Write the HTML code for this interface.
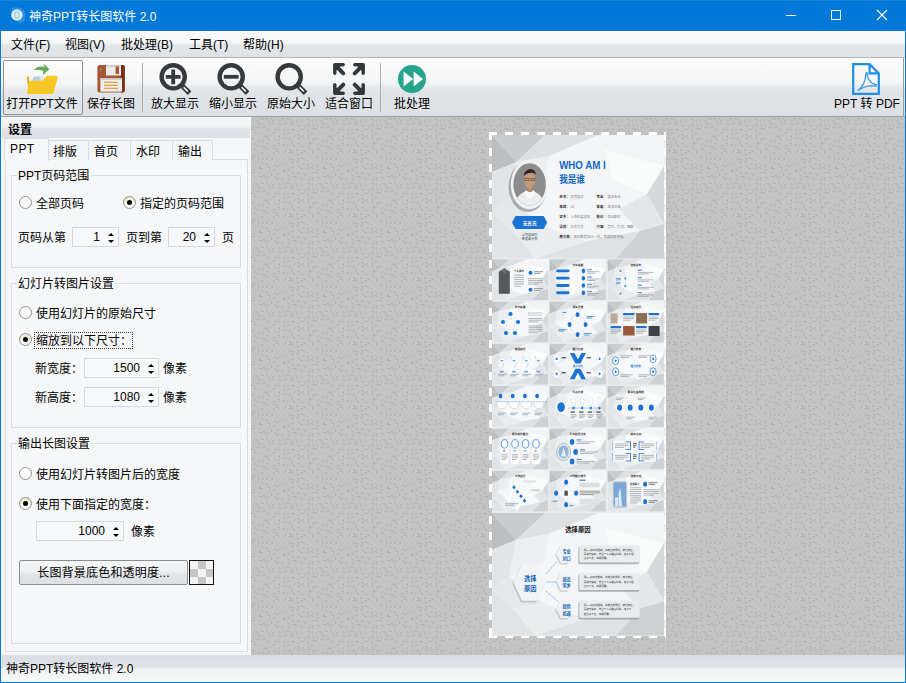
<!DOCTYPE html>
<html lang="zh-CN">
<head>
<meta charset="utf-8">
<title>神奇PPT转长图软件 2.0</title>
<style>
*{box-sizing:border-box;margin:0;padding:0}
html,body{width:906px;height:683px;overflow:hidden;background:#0078d7}
body{font-family:"Liberation Sans","Noto Sans CJK SC",sans-serif;font-size:12px;color:#000;position:relative}
.abs{position:absolute}
#win{position:absolute;left:0;top:0;width:906px;height:683px;background:#0078d7}
#title{position:absolute;left:0;top:0;width:906px;height:31px;background:#0078d7;border-top:1px solid #1883db}
#title .txt{position:absolute;left:29px;top:8px;color:#fff;font-size:12px;line-height:16px;white-space:nowrap}
#menubar{position:absolute;left:1px;top:31px;width:904px;height:26px;background:linear-gradient(#fafafa 0,#f6f7f8 44%,#e3e6e9 56%,#dfe3e6 100%)}
#menubar span{position:absolute;top:6px;line-height:16px;white-space:nowrap}
#mline{position:absolute;left:1px;top:57px;width:904px;height:1px;background:#b4b6b8}
#toolbar{position:absolute;left:1px;top:58px;width:904px;height:58px;background:linear-gradient(#fcfcfc 0,#f4f5f6 42%,#e1e5e8 55%,#dde1e5 100%)}
#tline{position:absolute;left:1px;top:116px;width:904px;height:1px;background:#9c9c9c}
.tb{position:absolute;top:2px;height:54px;width:0;text-align:center}
.tb .lb{position:absolute;left:-50px;width:100px;top:36px;line-height:16px;text-align:center;white-space:nowrap}
.tb svg{position:absolute;top:3px;left:50%;margin-left:-16px}
.sep{position:absolute;top:5px;width:1px;height:49px;background:#a9acae}
#left{position:absolute;left:1px;top:117px;width:250px;height:538px;background:#f5f6f7}
#lhead{position:absolute;left:1px;top:0;width:248px;height:21px;background:linear-gradient(#f6f7f8 0,#f1f2f4 46%,#e0e4e8 58%,#dde1e5 100%)}
#lhead b{position:absolute;left:6px;top:5px;line-height:16px;font-weight:bold}
#preview{position:absolute;left:251px;top:117px;width:654px;height:538px;background:#c1c1c1;overflow:hidden}
#status{position:absolute;left:1px;top:655px;width:904px;height:27px;background:linear-gradient(#d9dde2 0,#dfe3e7 44%,#f2f3f4 54%,#f7f8f8 100%)}
#status span{position:absolute;left:5px;top:6px;line-height:16px}

#left .t{position:absolute;line-height:16px;white-space:nowrap;margin-top:1px}
.tab{position:absolute;top:23px;height:20px;border:1px solid #d3dde4;border-bottom:none;background:#f4f5f6}
.tab span{position:absolute;left:4px;top:3px;line-height:16px;white-space:nowrap}
#page{position:absolute;left:4px;top:42px;width:243px;height:493px;border:1px solid #d3dde4;background:#f6f7f8}
.gb{position:absolute;left:10px;width:230px;border:1px solid #d5dee5}
.gl{position:absolute;left:16px;margin-top:1px;line-height:16px;background:#f6f7f8;padding:0 2px 0 1px;white-space:nowrap}
.rd{position:absolute;width:13px;height:13px;border:1px solid #8e8f8f;border-radius:50%;background:#fbfbfb}
.rd.on{background:linear-gradient(#eeecd4 0,#eeecd4 52%,#fdfdfd 53%);border-color:#8e8f8f}
.rd.on::after{content:"";position:absolute;left:3px;top:3px;width:5px;height:5px;border-radius:50%;background:#000}
.sp{position:absolute;height:20px;border:1px solid #cfd9e1;background:#f7f8f9}
.sp i{position:absolute;right:18px;top:1px;line-height:16px;font-style:normal}
.sp::before{content:"";position:absolute;right:4px;top:5px;border:3px solid transparent;border-top:none;border-bottom:3.5px solid #000;width:0;height:0}
.sp::after{content:"";position:absolute;right:4px;top:12px;border:3px solid transparent;border-bottom:none;border-top:3.5px solid #000;width:0;height:0}
</style>
</head>
<body>
<div id="win">
<div id="title">
<svg class="abs" style="left:8px;top:5px" width="20" height="20" viewBox="0 0 20 20"><path d="M4 1.5h9l4 4v8.5l-4.5 4-3.5-3.5-6-3z" fill="#2b90e0"/><circle cx="8.9" cy="9" r="5.7" fill="#d9ecee"/><path d="M7 6h4v6H7z" fill="none" stroke="#8cc7e6" stroke-width="1"/></svg>
<div class="txt">神奇PPT转长图软件 2.0</div>
<svg class="abs" style="left:780px;top:4px" width="120" height="22" viewBox="0 0 120 22"><path d="M6 10.5h10" stroke="#fff" stroke-width="1"/><rect x="51.5" y="5.5" width="9" height="9" fill="none" stroke="#fff" stroke-width="1"/><path d="M97 5l10 10M107 5l-10 10" stroke="#fff" stroke-width="1.1"/></svg>
</div>
<div id="menubar">
<span style="left:10px">文件(F)</span><span style="left:64px">视图(V)</span><span style="left:120px">批处理(B)</span><span style="left:188px">工具(T)</span><span style="left:242px">帮助(H)</span>
</div>
<div id="mline"></div>
<div id="toolbar">
<div class="abs" style="left:2px;top:2px;width:80px;height:55px;border:1px solid #8e9092;border-radius:2px;background:linear-gradient(#fdfdfd 0,#f3f4f5 45%,#e4e7ea 56%,#e0e4e7 100%)"></div>
<div class="tb" style="left:41px"><svg width="32" height="32" viewBox="0 0 32 32">
<path d="M7.5 7.6C10.5 3.2 15.5 2.6 18.6 4.4L17.4 0.6 23.4 6.2 16.8 12 17.4 8.4C14.4 6.6 10.4 6.4 7.5 7.6z" fill="#66a856"/>
<path d="M0.6 14.2l2.2-0.9 1.3 15.5-1.2 1.4z" fill="#e8a530"/>
<path d="M5.5 18l1.5-4.5 7-1 5 1.5 0 4z" fill="#dfe6ea"/><path d="M6.6 17.8l1-3.6 5-0.6 3 4.2z" fill="#b8cfe0"/>
<path d="M3.2 17.8h13.4l4.4-5h9.2q1.8 0.2 1.5 2l-4 14.6q-0.5 1.6-2.2 1.6H2.2q-1.6-0.2-1.1-1.8z" fill="#f5c827"/>
</svg><div class="lb">打开PPT文件</div></div>
<div class="tb" style="left:110px"><svg width="32" height="32" viewBox="0 0 32 32">
<rect x="2.4" y="2" width="27.4" height="27.4" rx="2.2" fill="#a65632"/>
<path d="M25.5 2h2.1q2.2 0 2.2 2.2v23q0 2.2-2.2 2.2h-2.1z" fill="#7b2f1f"/>
<rect x="11" y="2" width="15" height="10.5" fill="#e9eaeb"/><path d="M11 2h15v2H11z" fill="#cfd0d1"/><rect x="20.6" y="3.4" width="3.4" height="7.6" fill="#a65632"/>
<rect x="5.4" y="15.2" width="21.6" height="13.4" fill="#ecedee"/><path d="M5.4 15.2h21.6v1.6H5.4z" fill="#c9cacb"/>
<path d="M9 19.4h14M9 22.4h14M9 25.4h14" stroke="#e6a23c" stroke-width="1.3"/>
<rect x="4.6" y="5.6" width="2" height="2" fill="#8d8f92"/>
</svg><div class="lb">保存长图</div></div>
<div class="sep" style="left:141px"></div>
<div class="tb" style="left:174px"><svg width="32" height="32" viewBox="0 0 32 32">
<circle cx="14.2" cy="13.8" r="11.6" fill="none" stroke="#343a3f" stroke-width="4.4"/>
<path d="M22.4 22l8.2 8.2" stroke="#343a3f" stroke-width="5" stroke-linecap="butt"/><path d="M24.6 24.2l4.2 4.2" stroke="#f0f1f2" stroke-width="1.6"/>
<path d="M6.800 13.800h14.800M14.200 6.400v14.800" stroke="#343a3f" stroke-width="3.800"/>
</svg><div class="lb">放大显示</div></div>
<div class="tb" style="left:232px"><svg width="32" height="32" viewBox="0 0 32 32">
<circle cx="14.2" cy="13.8" r="11.6" fill="none" stroke="#343a3f" stroke-width="4.4"/>
<path d="M22.4 22l8.2 8.2" stroke="#343a3f" stroke-width="5"/><path d="M24.6 24.2l4.2 4.2" stroke="#f0f1f2" stroke-width="1.6"/>
<path d="M6.800 13.800h14.800" stroke="#343a3f" stroke-width="3.800"/>
</svg><div class="lb">缩小显示</div></div>
<div class="tb" style="left:290px"><svg width="32" height="32" viewBox="0 0 32 32">
<circle cx="14.2" cy="13.8" r="11.6" fill="none" stroke="#343a3f" stroke-width="4.4"/>
<path d="M22.4 22l8.2 8.2" stroke="#343a3f" stroke-width="5"/><path d="M24.6 24.2l4.2 4.2" stroke="#f0f1f2" stroke-width="1.6"/>
</svg><div class="lb">原始大小</div></div>
<div class="tb" style="left:348px"><svg width="32" height="32" viewBox="0 0 32 32" fill="#32373b" stroke="#32373b" stroke-linecap="round" stroke-linejoin="round">
<g id="fa"><path d="M1.800 10.200V1.800H10.200" fill="none" stroke-width="3.400"/><path d="M3 3l7.300 7.300" stroke-width="4"/><path d="M1.800 1.800h6.500l-6.500 6.500z" stroke-width="1"/></g>
<g transform="translate(32,0) scale(-1,1)"><path d="M1.800 10.200V1.800H10.200" fill="none" stroke-width="3.400"/><path d="M3 3l7.300 7.300" stroke-width="4"/><path d="M1.800 1.800h6.500l-6.500 6.500z" stroke-width="1"/></g>
<g transform="translate(0,32) scale(1,-1)"><path d="M1.800 10.200V1.800H10.200" fill="none" stroke-width="3.400"/><path d="M3 3l7.300 7.300" stroke-width="4"/><path d="M1.800 1.800h6.500l-6.500 6.500z" stroke-width="1"/></g>
<g transform="translate(32,32) scale(-1,-1)"><path d="M1.800 10.200V1.800H10.200" fill="none" stroke-width="3.400"/><path d="M3 3l7.300 7.300" stroke-width="4"/><path d="M1.800 1.800h6.500l-6.500 6.500z" stroke-width="1"/></g>
</svg><div class="lb">适合窗口</div></div>
<div class="sep" style="left:379px"></div>
<div class="tb" style="left:411px"><svg width="32" height="32" viewBox="0 0 32 32">
<circle cx="16" cy="16" r="14" fill="#27a58c"/>
<path d="M7.6 8.600l9.400 7.400-9.400 7.400z" fill="#fff"/><path d="M17.600 8.600l9.400 7.400-9.400 7.400z" fill="#fff"/>
</svg><div class="lb">批处理</div></div>
<div class="tb" style="left:865px"><svg width="32" height="32" viewBox="0 0 32 32">
<path d="M3.200 1.200h16.400l9.200 9.200v20.400H3.200z" fill="none" stroke="#1e8ee3" stroke-width="2.200"/>
<path d="M19.600 1.200v9.200h9.200" fill="none" stroke="#1e8ee3" stroke-width="2.200"/>
<path d="M8 27.500c4-3 7.500-9.500 8-17 .1-1.400 1.400-1.200 1.300.2-.3 4.600 2.700 9.800 8.200 10.800 1.600.3 1.400 1.800-.2 1.600-5-.6-11.800.6-17.300 4.400z" fill="none" stroke="#3b9be8" stroke-width="1.300"/>
</svg><div class="lb" style="left:-49px">PPT 转 PDF</div></div>
<div class="abs" style="left:902px;top:0;width:1px;height:58px;background:#9a9c9e"></div>
</div>
<div id="tline"></div>
<div id="left">
<div id="lhead"><b>设置</b></div>
<div id="page"></div>
<div class="tab" style="left:47px;width:41px"><span>排版</span></div>
<div class="tab" style="left:87px;width:43px"><span style="left:5px">首页</span></div>
<div class="tab" style="left:129px;width:43px"><span style="left:5px">水印</span></div>
<div class="tab" style="left:171px;width:41px"><span style="left:5px">输出</span></div>
<div class="tab" style="left:3px;top:21px;width:45px;height:23px;background:#f6f7f8"><span style="top:2px;letter-spacing:0.4px;left:5px">PPT</span></div>
<div class="gb" style="top:58px;height:93px"></div><div class="gl" style="top:50px">PPT页码范围</div>
<div class="rd" style="left:18px;top:79px"></div><div class="t" style="left:35px;top:78px">全部页码</div>
<div class="rd on" style="left:122px;top:79px"></div><div class="t" style="left:139px;top:78px">指定的页码范围</div>
<div class="t" style="left:17px;top:112px">页码从第</div>
<div class="sp" style="left:71px;top:110px;width:47px"><i>1</i></div>
<div class="t" style="left:125px;top:112px">页到第</div>
<div class="sp" style="left:167px;top:110px;width:47px"><i>20</i></div>
<div class="t" style="left:221px;top:112px">页</div>
<div class="gb" style="top:166px;height:145px"></div><div class="gl" style="top:158px">幻灯片转图片设置</div>
<div class="rd" style="left:18px;top:189px"></div><div class="t" style="left:35px;top:188px">使用幻灯片的原始尺寸</div>
<div class="rd on" style="left:18px;top:216px"></div><div class="t" style="left:35px;top:215px">缩放到以下尺寸：</div>
<div class="abs" style="left:33px;top:215px;width:99px;height:17px;border:1px dotted #333"></div>
<div class="t" style="left:34px;top:243px">新宽度：</div>
<div class="sp" style="left:83px;top:241px;width:75px"><i>1500</i></div>
<div class="t" style="left:162px;top:243px">像素</div>
<div class="t" style="left:34px;top:272px">新高度：</div>
<div class="sp" style="left:83px;top:270px;width:75px"><i>1080</i></div>
<div class="t" style="left:162px;top:272px">像素</div>
<div class="gb" style="top:326px;height:201px"></div><div class="gl" style="top:318px">输出长图设置</div>
<div class="rd" style="left:18px;top:350px"></div><div class="t" style="left:35px;top:349px">使用幻灯片转图片后的宽度</div>
<div class="rd on" style="left:18px;top:380px"></div><div class="t" style="left:35px;top:379px">使用下面指定的宽度：</div>
<div class="sp" style="left:35px;top:404px;width:88px"><i>1000</i></div>
<div class="t" style="left:130px;top:406px">像素</div>
<div class="abs" style="left:18px;top:443px;width:169px;height:25px;border:1px solid #8b8d8f;border-radius:2px;background:linear-gradient(#f6f7f8 0,#f0f1f2 45%,#e0e4e7 58%,#dde1e5 100%)"><span class="t" style="left:0;right:0;top:3px;text-align:center;letter-spacing:0.2px">长图背景底色和透明度...</span></div>
<svg class="abs" style="left:188px;top:443px" width="25" height="25" viewBox="0 0 25 25"><rect x="0.5" y="0.5" width="24" height="24" fill="#f4f4f4" stroke="#111" stroke-width="1"/><path d="M9 1h8v8H9zM1 9h8v8H1zM17 9h7v8h-7zM9 17h8v7H9z" fill="#c6c6c6"/></svg>
</div>
<div id="preview">
<svg class="abs" style="left:0;top:0" width="654" height="538"><defs><pattern id="tx" width="64" height="64" patternUnits="userSpaceOnUse"><path d="M3 2.5h1m-2 1h1m-2 1h1M1 8.5h1v2M0.5 11v1h2M3 15.5h3M0 21.5h2v1M4 26.5h1m-2 1h1m-2 1h1M2.5 31v1h2M2.5 37v2h1M0 40.5h1v2M2.5 47v3M1 52.5h2v1M0 55.5h2v1M2 60.5h3M6.5 2v2h1M7 6.5h1v2M6.5 9v1h2M7 16.5h3M6 23.5h2v1M5 28.5h2v1M6 33.5h1m0 1h1m0 1h1M6 36.5h1v2M7.5 40v2h1M6 44.5h1m0 1h1m0 1h1M7 49.5h1v2M9 54.5h1m-2 1h1m-2 1h1M8 59.5h2v1M10.5 1v1h2M11 6.5h1m0 1h1m0 1h1M11 10.5h3M13.5 18v1h2M11 23.5h1v2M10.5 28v1h2M12.5 29v1h2M10.5 35v1h2M11.5 40v2h1M10 45.5h1v2M9.5 50v1h2M13 57.5h1m-2 1h1m-2 1h1M13 59.5h1m0 1h1m0 1h1M15 1.5h1v2M17 5.5h1v2M15 12.5h2v1M17 18.5h1m-2 1h1m-2 1h1M17.5 21v2h1M15 26.5h3M15 32.5h3M18 38.5h1m-2 1h1m-2 1h1M15.5 40v2h1M15.5 46v1h2M17 50.5h1v2M17 54.5h1m0 1h1m0 1h1M16.5 59v1h2M20.5 2v1h2M22 5.5h1m-2 1h1m-2 1h1M23 12.5h2v1M21 15.5h2v1M23.5 21v3M22 28.5h2v1M22.5 29v2h1M22.5 35v2h1M19 41.5h2v1M23.5 47v1h2M22.5 52v3M20.5 56v2h1M23 60.5h2v1M28.5 2v1h2M27 6.5h2v1M27.5 10v2h1M28.5 18v3M26.5 22v1h2M26 26.5h2v1M24 32.5h2v1M25 34.5h2v1M27 42.5h1m-2 1h1m-2 1h1M29 46.5h1m-2 1h1m-2 1h1M25 49.5h3M25 56.5h2v1M27 61.5h1m-2 1h1m-2 1h1M31 1.5h1m0 1h1m0 1h1M32 5.5h1m0 1h1m0 1h1M32 12.5h1v2M32.5 16v1h2M33.5 20v1h2M31 27.5h2v1M32 33.5h3M34 34.5h1m-2 1h1m-2 1h1M30 40.5h1m0 1h1m0 1h1M31.5 46v3M32.5 52v1h2M31 54.5h2v1M30 61.5h3M36.5 1v1h2M36 5.5h1m-2 1h1m-2 1h1M35 12.5h3M35 15.5h2v1M38.5 20v2h1M36.5 27v3M38 32.5h1v2M37 35.5h2v1M37 41.5h2v1M35.5 45v3M36 52.5h2v1M36 57.5h1m0 1h1m0 1h1M37 61.5h1v2M39 3.5h1m0 1h1m0 1h1M39 6.5h2v1M40 12.5h2v1M44 18.5h1m-2 1h1m-2 1h1M40.5 23v2h1M42.5 27v2h1M40.5 33v2h1M43.5 36v3M40 42.5h2v1M42 44.5h1m-2 1h1m-2 1h1M40 50.5h3M41.5 54v2h1M41 59.5h2v1M45.5 3v1h2M46 8.5h2v1M49 12.5h1m-2 1h1m-2 1h1M46 17.5h1v2M46 21.5h2v1M46 26.5h2v1M45.5 32v1h2M45 37.5h2v1M46 41.5h1v2M45 44.5h2v1M46 49.5h2v1M46.5 55v1h2M44.5 59v1h2M49 2.5h1m0 1h1m0 1h1M52 8.5h1m0 1h1m0 1h1M50.5 11v1h2M52 18.5h1m-2 1h1m-2 1h1M51 20.5h1m0 1h1m0 1h1M51.5 28v1h2M51 33.5h2v1M49 35.5h3M50.5 40v1h2M51.5 46v1h2M49 51.5h3M52 56.5h1m0 1h1m0 1h1M49 61.5h2v1M56 2.5h2v1M56 7.5h2v1M56 13.5h1v2M57.5 17v3M57.5 20v3M57 25.5h1v2M57 30.5h1v2M54 34.5h1m0 1h1m0 1h1M54 42.5h1m0 1h1m0 1h1M56 47.5h1v2M55 51.5h2v1M54.5 56v3M57.5 61v2h1M61.5 2v3M61 7.5h1v2M61 11.5h2v1M59 16.5h2v1M61 21.5h1v2M59.5 25v1h2M61.5 33v2h1M63 34.5h1m-2 1h1m-2 1h1M59 39.5h1m0 1h1m0 1h1M60 46.5h1m0 1h1m0 1h1M59 50.5h2v1M63 54.5h1m-2 1h1m-2 1h1M60 60.5h1v2" fill="none" stroke="#b3b3b3" stroke-width="1" shape-rendering="crispEdges"/></pattern></defs><rect width="654" height="538" fill="#c3c3c3"/><rect width="654" height="538" fill="url(#tx)"/></svg>
<svg class="abs" style="left:238px;top:15px" width="177" height="506" viewBox="0 0 177 506" font-family="Liberation Sans,Noto Sans CJK SC,sans-serif">
<rect x="0" y="0" width="177" height="506" fill="#e9ebed"/>
<rect x="3" y="3" width="172" height="123.5" fill="#f4f5f6"/><polygon points="3,3 56.3,3 27.1,30.2" fill="#c9cbcd"/><polygon points="3,3 27.1,30.2 3,40" fill="#bcbec0"/><polygon points="56.3,3 109.6,3 59.8,24 27.1,30.2" fill="#dde1e4"/><polygon points="3,40 27.1,30.2 20.2,67.2 3,79.6" fill="#e2e5e8"/><polygon points="27.1,30.2 59.8,24 54.6,52.4 20.2,67.2" fill="#eceef0"/><polygon points="109.6,3 175,3 175,33.9 116.5,17.8" fill="#f3f4f6"/><polygon points="116.5,17.8 175,33.9 157.8,62.3 123.4,47.5" fill="#fafbfb"/><polygon points="175,33.9 175,91.9 157.8,62.3" fill="#d6d9dc"/><polygon points="157.8,62.3 175,91.9 150.9,99.3 130.3,77.1" fill="#e4e7ea"/><polygon points="175,91.9 175,126.5 126.8,126.5 150.9,99.3" fill="#ced1d4"/><polygon points="46,126.5 126.8,126.5 150.9,99.3 97.6,109.2" fill="#dee2e5"/><polygon points="3,79.6 3,126.5 46,126.5 23.6,99.3" fill="#e1e4e7"/><polygon points="3,79.6 20.2,67.2 54.6,94.4 23.6,99.3" fill="#e6e9eb"/><polygon points="23.6,99.3 54.6,94.4 97.6,109.2 46,126.5" fill="#eaedef"/>
<ellipse cx="38.8" cy="54.8" rx="19.2" ry="25.2" fill="#8d8f91" opacity="0.7"/>
<ellipse cx="40.4" cy="52.6" rx="18.6" ry="24.6" fill="#f1f2f3"/>
<ellipse cx="40.6" cy="52.4" rx="16.2" ry="21.2" fill="#8c8c8c"/>
<clipPath id="pc"><ellipse cx="40.6" cy="52.4" rx="16.2" ry="21.2"/></clipPath>
<g clip-path="url(#pc)"><ellipse cx="40.6" cy="76" rx="15.5" ry="17" fill="#eceeef"/><rect x="38.6" y="54" width="4.4" height="6" fill="#b88f6e"/><ellipse cx="40.8" cy="47.5" rx="5.6" ry="9" fill="#c39a78"/><path d="M35.8 46.5h4.2v2h-4.2zM41.6 46.5h4.2v2h-4.2z" fill="none" stroke="#3a302a" stroke-width="0.5"/><path d="M34.8 44c0-8 11.5-9.5 12.2-1.5c-3-2.5-8-2.5-12.2 1.5z" fill="#2a2522"/><path d="M36.5 58l4.3 3 4.3-3 1 4-5.3 5-5.3-5z" fill="#fafafa"/></g>
<text transform="translate(70.2,37.1) scale(1,1.2)" font-size="9.7" fill="#1068c4" font-weight="bold" text-anchor="start">WHO AM I</text>
<text transform="translate(70.2,51.2) scale(1,1.2)" font-size="8.6" fill="#1068c4" font-weight="bold" text-anchor="start">我是谁</text>
<text x="70.6" y="66" font-size="3.3" fill="#222" font-weight="bold">姓名：<tspan fill="#7a7f85" font-weight="normal" dx="1">吴克国汉</tspan></text>
<text x="107.6" y="66" font-size="3.3" fill="#222" font-weight="bold">专业：<tspan fill="#7a7f85" font-weight="normal" dx="1">高深专业</tspan></text>
<text x="70.6" y="76" font-size="3.3" fill="#222" font-weight="bold">年龄：<tspan fill="#7a7f85" font-weight="normal" dx="1">20</tspan></text>
<text x="107.6" y="76" font-size="3.3" fill="#222" font-weight="bold">年级：<tspan fill="#7a7f85" font-weight="normal" dx="1">高深年级</tspan></text>
<text x="70.6" y="86.1" font-size="3.3" fill="#222" font-weight="bold">家乡：<tspan fill="#7a7f85" font-weight="normal" dx="1">上海市嘉定区</tspan></text>
<text x="107.6" y="86.1" font-size="3.3" fill="#222" font-weight="bold">职位：<tspan fill="#7a7f85" font-weight="normal" dx="1">高深职位</tspan></text>
<text x="70.6" y="96.2" font-size="3.3" fill="#222" font-weight="bold">学校：<tspan fill="#7a7f85" font-weight="normal" dx="1">北京大学</tspan></text>
<text x="107.6" y="96.2" font-size="3.3" fill="#222" font-weight="bold">兴趣：<tspan fill="#7a7f85" font-weight="normal" dx="1">音乐、打球、唱歌</tspan></text>
<text x="70.6" y="106" font-size="3.3" fill="#222" font-weight="bold">座右铭：<tspan fill="#7a7f85" font-weight="normal" dx="1">每天都超自己一次，我真的很幸福。</tspan></text>
<polygon points="23,90.5 26.5,84 54.7,84 58.2,90.5 54.7,97 26.5,97" fill="#1a72d2"/>
<text x="40.6" y="92.8" font-size="4.6" fill="#fff" font-weight="bold" text-anchor="middle">无名氏</text>
<text x="40.6" y="103.6" font-size="3.1" fill="#333" font-weight="normal" text-anchor="middle">公司总经理</text>
<text x="40.6" y="108.2" font-size="3.1" fill="#333" font-weight="normal" text-anchor="middle">带发或头衔</text>
<g><rect x="3" y="127.2" width="56.3" height="40.8" fill="#f6f7f8"/><polygon points="3,127.2 20.5,127.2 10.9,136.2" fill="#c9cbcd"/><polygon points="3,127.2 10.9,136.2 3,139.4" fill="#bcbec0"/><polygon points="20.5,127.2 37.9,127.2 21.6,134.1 10.9,136.2" fill="#dde1e4"/><polygon points="3,139.4 10.9,136.2 8.6,148.4 3,152.5" fill="#e2e5e8"/><polygon points="10.9,136.2 21.6,134.1 19.9,143.5 8.6,148.4" fill="#eceef0"/><polygon points="37.9,127.2 59.3,127.2 59.3,137.4 40.2,132.1" fill="#f3f4f6"/><polygon points="40.2,132.1 59.3,137.4 53.7,146.8 42.4,141.9" fill="#fafbfb"/><polygon points="59.3,137.4 59.3,156.6 53.7,146.8" fill="#d6d9dc"/><polygon points="53.7,146.8 59.3,156.6 51.4,159 44.7,151.7" fill="#e4e7ea"/><polygon points="59.3,156.6 59.3,168 43.5,168 51.4,159" fill="#ced1d4"/><polygon points="17.1,168 43.5,168 51.4,159 34,162.3" fill="#dee2e5"/><polygon points="3,152.5 3,168 17.1,168 9.8,159" fill="#e1e4e7"/><polygon points="3,152.5 8.6,148.4 19.9,157.4 9.8,159" fill="#e6e9eb"/><polygon points="9.8,159 19.9,157.4 34,162.3 17.1,168" fill="#eaedef"/><rect x="9.5" y="135.7" width="11.5" height="26" fill="#dfe2e4" rx="1"/><path d="M9.8 139.7q5.5-5 11 0v22h-11z" fill="#55585c"/><ellipse cx="15.3" cy="138.7" rx="2" ry="2.6" fill="#6d6f72"/><text x="25" y="140.2" font-size="2.5" fill="#222" font-weight="bold" text-anchor="start">个人简介</text><path d="M25 143.2h10M25 145.4h10M25 147.6h10M25 149.8h10M25 152h10M25 154.2h7" stroke="#858b91" stroke-width="0.6" fill="none"/><circle cx="41.5" cy="140.7" r="2" fill="#1a72d2"/><circle cx="41.5" cy="157.7" r="2" fill="#1a72d2"/><path d="M45 139.7h9M45 141.4h6.3" stroke="#555" stroke-width="0.6" fill="none"/><path d="M39 146.7h15M39 148.5h15M39 150.3h15M39 152.1h10.5" stroke="#858b91" stroke-width="0.6" fill="none"/><path d="M45 156.7h9M45 158.4h6.3" stroke="#555" stroke-width="0.6" fill="none"/></g>
<g><rect x="60.6" y="127.2" width="56.3" height="40.8" fill="#f6f7f8"/><polygon points="60.6,127.2 78.1,127.2 68.5,136.2" fill="#c9cbcd"/><polygon points="60.6,127.2 68.5,136.2 60.6,139.4" fill="#bcbec0"/><polygon points="78.1,127.2 95.5,127.2 79.2,134.1 68.5,136.2" fill="#dde1e4"/><polygon points="60.6,139.4 68.5,136.2 66.2,148.4 60.6,152.5" fill="#e2e5e8"/><polygon points="68.5,136.2 79.2,134.1 77.5,143.5 66.2,148.4" fill="#eceef0"/><polygon points="95.5,127.2 116.9,127.2 116.9,137.4 97.8,132.1" fill="#f3f4f6"/><polygon points="97.8,132.1 116.9,137.4 111.3,146.8 100,141.9" fill="#fafbfb"/><polygon points="116.9,137.4 116.9,156.6 111.3,146.8" fill="#d6d9dc"/><polygon points="111.3,146.8 116.9,156.6 109,159 102.3,151.7" fill="#e4e7ea"/><polygon points="116.9,156.6 116.9,168 101.1,168 109,159" fill="#ced1d4"/><polygon points="74.7,168 101.1,168 109,159 91.6,162.3" fill="#dee2e5"/><polygon points="60.6,152.5 60.6,168 74.7,168 67.4,159" fill="#e1e4e7"/><polygon points="60.6,152.5 66.2,148.4 77.5,157.4 67.4,159" fill="#e6e9eb"/><polygon points="67.4,159 77.5,157.4 91.6,162.3 74.7,168" fill="#eaedef"/><text x="88.8" y="133.8" font-size="2.7" fill="#222" font-weight="bold" text-anchor="middle">专业技能</text><rect x="67.1" y="137.4" width="18" height="2.9" fill="#fff" rx="1.4"/><rect x="67.1" y="137.4" width="13.5" height="2.9" fill="#1a72d2" rx="1.4"/><ellipse cx="94.4" cy="138.9" rx="1.7" ry="2.3" fill="#1a72d2"/><path d="M98.1 137.7h4.9" stroke="#1a72d2" stroke-width="0.8" fill="none"/><path d="M98.1 139.7h12M98.1 141.2h8.4" stroke="#858b91" stroke-width="0.6" fill="none"/><rect x="67.1" y="144.7" width="18" height="2.9" fill="#fff" rx="1.4"/><rect x="67.1" y="144.7" width="13.5" height="2.9" fill="#1a72d2" rx="1.4"/><ellipse cx="94.4" cy="146.2" rx="1.7" ry="2.3" fill="#1a72d2"/><path d="M98.1 145h4.9" stroke="#1a72d2" stroke-width="0.8" fill="none"/><path d="M98.1 147h12M98.1 148.5h8.4" stroke="#858b91" stroke-width="0.6" fill="none"/><rect x="67.1" y="152" width="18" height="2.9" fill="#fff" rx="1.4"/><rect x="67.1" y="152" width="13.5" height="2.9" fill="#1a72d2" rx="1.4"/><ellipse cx="94.4" cy="153.5" rx="1.7" ry="2.3" fill="#1a72d2"/><path d="M98.1 152.3h4.9" stroke="#1a72d2" stroke-width="0.8" fill="none"/><path d="M98.1 154.3h12M98.1 155.8h8.4" stroke="#858b91" stroke-width="0.6" fill="none"/><rect x="67.1" y="159.3" width="18" height="2.9" fill="#fff" rx="1.4"/><rect x="67.1" y="159.3" width="13.5" height="2.9" fill="#1a72d2" rx="1.4"/><ellipse cx="94.4" cy="160.8" rx="1.7" ry="2.3" fill="#1a72d2"/><path d="M98.1 159.6h4.9" stroke="#1a72d2" stroke-width="0.8" fill="none"/><path d="M98.1 161.6h12M98.1 163.1h8.4" stroke="#858b91" stroke-width="0.6" fill="none"/></g>
<g><rect x="118.6" y="127.2" width="56.3" height="40.8" fill="#f6f7f8"/><polygon points="118.6,127.2 136.1,127.2 126.5,136.2" fill="#c9cbcd"/><polygon points="118.6,127.2 126.5,136.2 118.6,139.4" fill="#bcbec0"/><polygon points="136.1,127.2 153.5,127.2 137.2,134.1 126.5,136.2" fill="#dde1e4"/><polygon points="118.6,139.4 126.5,136.2 124.2,148.4 118.6,152.5" fill="#e2e5e8"/><polygon points="126.5,136.2 137.2,134.1 135.5,143.5 124.2,148.4" fill="#eceef0"/><polygon points="153.5,127.2 174.9,127.2 174.9,137.4 155.8,132.1" fill="#f3f4f6"/><polygon points="155.8,132.1 174.9,137.4 169.3,146.8 158,141.9" fill="#fafbfb"/><polygon points="174.9,137.4 174.9,156.6 169.3,146.8" fill="#d6d9dc"/><polygon points="169.3,146.8 174.9,156.6 167,159 160.3,151.7" fill="#e4e7ea"/><polygon points="174.9,156.6 174.9,168 159.1,168 167,159" fill="#ced1d4"/><polygon points="132.7,168 159.1,168 167,159 149.6,162.3" fill="#dee2e5"/><polygon points="118.6,152.5 118.6,168 132.7,168 125.4,159" fill="#e1e4e7"/><polygon points="118.6,152.5 124.2,148.4 135.5,157.4 125.4,159" fill="#e6e9eb"/><polygon points="125.4,159 135.5,157.4 149.6,162.3 132.7,168" fill="#eaedef"/><text x="146.8" y="133.8" font-size="2.7" fill="#222" font-weight="bold" text-anchor="middle">自我评价</text><text x="129.1" y="148.2" font-size="2.6" fill="#1a72d2" font-weight="bold" text-anchor="middle">自我</text><text x="129.1" y="151.7" font-size="2.6" fill="#1a72d2" font-weight="bold" text-anchor="middle">评价</text><path d="M131.6 136.2q10 12 0 26" fill="none" stroke="#c5ccd3" stroke-width="0.5"/><rect x="130.6" y="138.2" width="1.6" height="1.6" fill="#1a72d2"/><path d="M148.6 138.2h4.2" stroke="#1a72d2" stroke-width="0.9" fill="none"/><path d="M148.6 140.4h16M148.6 141.9h11.2" stroke="#858b91" stroke-width="0.6" fill="none"/><rect x="135.6" y="145.7" width="1.6" height="1.6" fill="#1a72d2"/><path d="M148.6 145.7h4.2" stroke="#1a72d2" stroke-width="0.9" fill="none"/><path d="M148.6 147.9h16M148.6 149.4h11.2" stroke="#858b91" stroke-width="0.6" fill="none"/><rect x="135.6" y="153.2" width="1.6" height="1.6" fill="#1a72d2"/><path d="M148.6 153.2h4.2" stroke="#1a72d2" stroke-width="0.9" fill="none"/><path d="M148.6 155.4h16M148.6 156.9h11.2" stroke="#858b91" stroke-width="0.6" fill="none"/><rect x="130.6" y="160.7" width="1.6" height="1.6" fill="#1a72d2"/><path d="M148.6 160.7h4.2" stroke="#1a72d2" stroke-width="0.9" fill="none"/><path d="M148.6 162.9h16M148.6 164.4h11.2" stroke="#858b91" stroke-width="0.6" fill="none"/></g>
<g><rect x="3" y="169.5" width="56.3" height="40.8" fill="#f6f7f8"/><polygon points="3,169.5 20.5,169.5 10.9,178.5" fill="#c9cbcd"/><polygon points="3,169.5 10.9,178.5 3,181.7" fill="#bcbec0"/><polygon points="20.5,169.5 37.9,169.5 21.6,176.4 10.9,178.5" fill="#dde1e4"/><polygon points="3,181.7 10.9,178.5 8.6,190.7 3,194.8" fill="#e2e5e8"/><polygon points="10.9,178.5 21.6,176.4 19.9,185.8 8.6,190.7" fill="#eceef0"/><polygon points="37.9,169.5 59.3,169.5 59.3,179.7 40.2,174.4" fill="#f3f4f6"/><polygon points="40.2,174.4 59.3,179.7 53.7,189.1 42.4,184.2" fill="#fafbfb"/><polygon points="59.3,179.7 59.3,198.9 53.7,189.1" fill="#d6d9dc"/><polygon points="53.7,189.1 59.3,198.9 51.4,201.3 44.7,194" fill="#e4e7ea"/><polygon points="59.3,198.9 59.3,210.3 43.5,210.3 51.4,201.3" fill="#ced1d4"/><polygon points="17.1,210.3 43.5,210.3 51.4,201.3 34,204.6" fill="#dee2e5"/><polygon points="3,194.8 3,210.3 17.1,210.3 9.8,201.3" fill="#e1e4e7"/><polygon points="3,194.8 8.6,190.7 19.9,199.7 9.8,201.3" fill="#e6e9eb"/><polygon points="9.8,201.3 19.9,199.7 34,204.6 17.1,210.3" fill="#eaedef"/><text x="31.1" y="176.1" font-size="2.7" fill="#222" font-weight="bold" text-anchor="middle">社会实践</text><ellipse cx="21.5" cy="192.5" rx="4.2" ry="5.2" fill="#fff" stroke="#b9c0c7" stroke-width="0.4"/><circle cx="21.5" cy="182" r="2.1" fill="#1a72d2"/><circle cx="14" cy="190" r="2.1" fill="#1a72d2"/><circle cx="29" cy="190" r="2.1" fill="#1a72d2"/><circle cx="17" cy="201" r="2.1" fill="#1a72d2"/><circle cx="26" cy="201" r="2.1" fill="#1a72d2"/><rect x="39.5" y="180.5" width="13.5" height="3" fill="#e3e6e9" stroke="#aeb4ba" stroke-width="0.3"/><path d="M39.5 186.5h14M39.5 188.2h14M39.5 189.9h9.8" stroke="#858b91" stroke-width="0.6" fill="none"/><path d="M39.5 194h14M39.5 195.7h14M39.5 197.4h14M39.5 199.1h14M39.5 200.8h9.8" stroke="#858b91" stroke-width="0.6" fill="none"/></g>
<g><rect x="60.6" y="169.5" width="56.3" height="40.8" fill="#f6f7f8"/><polygon points="60.6,169.5 78.1,169.5 68.5,178.5" fill="#c9cbcd"/><polygon points="60.6,169.5 68.5,178.5 60.6,181.7" fill="#bcbec0"/><polygon points="78.1,169.5 95.5,169.5 79.2,176.4 68.5,178.5" fill="#dde1e4"/><polygon points="60.6,181.7 68.5,178.5 66.2,190.7 60.6,194.8" fill="#e2e5e8"/><polygon points="68.5,178.5 79.2,176.4 77.5,185.8 66.2,190.7" fill="#eceef0"/><polygon points="95.5,169.5 116.9,169.5 116.9,179.7 97.8,174.4" fill="#f3f4f6"/><polygon points="97.8,174.4 116.9,179.7 111.3,189.1 100,184.2" fill="#fafbfb"/><polygon points="116.9,179.7 116.9,198.9 111.3,189.1" fill="#d6d9dc"/><polygon points="111.3,189.1 116.9,198.9 109,201.3 102.3,194" fill="#e4e7ea"/><polygon points="116.9,198.9 116.9,210.3 101.1,210.3 109,201.3" fill="#ced1d4"/><polygon points="74.7,210.3 101.1,210.3 109,201.3 91.6,204.6" fill="#dee2e5"/><polygon points="60.6,194.8 60.6,210.3 74.7,210.3 67.4,201.3" fill="#e1e4e7"/><polygon points="60.6,194.8 66.2,190.7 77.5,199.7 67.4,201.3" fill="#e6e9eb"/><polygon points="67.4,201.3 77.5,199.7 91.6,204.6 74.7,210.3" fill="#eaedef"/><text x="88.8" y="176.1" font-size="2.7" fill="#222" font-weight="bold" text-anchor="middle">获奖荣誉</text><ellipse cx="88.6" cy="192.5" rx="7.6" ry="9.6" fill="none" stroke="#c9cfd5" stroke-width="0.5"/><ellipse cx="88.6" cy="182.5" rx="1.9" ry="2.5" fill="#1a72d2"/><ellipse cx="80.6" cy="192.5" rx="1.9" ry="2.5" fill="#1a72d2"/><ellipse cx="96.6" cy="192.5" rx="1.9" ry="2.5" fill="#1a72d2"/><ellipse cx="88.6" cy="202.5" rx="1.9" ry="2.5" fill="#1a72d2"/><path d="M73.6 180.5h3.5" stroke="#1a72d2" stroke-width="0.8" fill="none"/><path d="M97.6 184.5h8M97.6 186h5.6" stroke="#1a72d2" stroke-width="0.7" fill="none"/><path d="M69.6 197.5h8M69.6 199h5.6" stroke="#1a72d2" stroke-width="0.7" fill="none"/><path d="M94.6 201.5h8M94.6 203h5.6" stroke="#1a72d2" stroke-width="0.7" fill="none"/></g>
<g><rect x="118.6" y="169.5" width="56.3" height="40.8" fill="#f6f7f8"/><polygon points="118.6,169.5 136.1,169.5 126.5,178.5" fill="#c9cbcd"/><polygon points="118.6,169.5 126.5,178.5 118.6,181.7" fill="#bcbec0"/><polygon points="136.1,169.5 153.5,169.5 137.2,176.4 126.5,178.5" fill="#dde1e4"/><polygon points="118.6,181.7 126.5,178.5 124.2,190.7 118.6,194.8" fill="#e2e5e8"/><polygon points="126.5,178.5 137.2,176.4 135.5,185.8 124.2,190.7" fill="#eceef0"/><polygon points="153.5,169.5 174.9,169.5 174.9,179.7 155.8,174.4" fill="#f3f4f6"/><polygon points="155.8,174.4 174.9,179.7 169.3,189.1 158,184.2" fill="#fafbfb"/><polygon points="174.9,179.7 174.9,198.9 169.3,189.1" fill="#d6d9dc"/><polygon points="169.3,189.1 174.9,198.9 167,201.3 160.3,194" fill="#e4e7ea"/><polygon points="174.9,198.9 174.9,210.3 159.1,210.3 167,201.3" fill="#ced1d4"/><polygon points="132.7,210.3 159.1,210.3 167,201.3 149.6,204.6" fill="#dee2e5"/><polygon points="118.6,194.8 118.6,210.3 132.7,210.3 125.4,201.3" fill="#e1e4e7"/><polygon points="118.6,194.8 124.2,190.7 135.5,199.7 125.4,201.3" fill="#e6e9eb"/><polygon points="125.4,201.3 135.5,199.7 149.6,204.6 132.7,210.3" fill="#eaedef"/><text x="146.8" y="176.1" font-size="2.7" fill="#222" font-weight="bold" text-anchor="middle">活动经历</text><rect x="121.6" y="181.5" width="7" height="10" fill="#b9aa9b"/><rect x="134.1" y="181" width="11.5" height="2.2" fill="#1a72d2"/><path d="M134.1 185h11M134.1 186.6h11M134.1 188.2h7.7" stroke="#858b91" stroke-width="0.6" fill="none"/><rect x="147.1" y="181" width="11" height="10.5" fill="#8d6f55"/><rect x="159.6" y="181" width="10.5" height="2.2" fill="#1a72d2"/><path d="M159.6 185h10M159.6 186.6h10M159.6 188.2h7" stroke="#858b91" stroke-width="0.6" fill="none"/><rect x="121.6" y="194" width="10.5" height="2.2" fill="#1a72d2"/><path d="M121.6 198h10M121.6 199.6h10M121.6 201.2h7" stroke="#858b91" stroke-width="0.6" fill="none"/><rect x="134.1" y="194" width="11.5" height="9.5" fill="#9c5a3c"/><rect x="147.1" y="194" width="10.5" height="2.2" fill="#1a72d2"/><path d="M147.1 198h10M147.1 199.6h10M147.1 201.2h7" stroke="#858b91" stroke-width="0.6" fill="none"/><rect x="159.6" y="194" width="11" height="10" fill="#3e4247"/></g>
<g><rect x="3" y="211.8" width="56.3" height="40.8" fill="#f6f7f8"/><polygon points="3,211.8 20.5,211.8 10.9,220.8" fill="#c9cbcd"/><polygon points="3,211.8 10.9,220.8 3,224" fill="#bcbec0"/><polygon points="20.5,211.8 37.9,211.8 21.6,218.7 10.9,220.8" fill="#dde1e4"/><polygon points="3,224 10.9,220.8 8.6,233 3,237.1" fill="#e2e5e8"/><polygon points="10.9,220.8 21.6,218.7 19.9,228.1 8.6,233" fill="#eceef0"/><polygon points="37.9,211.8 59.3,211.8 59.3,222 40.2,216.7" fill="#f3f4f6"/><polygon points="40.2,216.7 59.3,222 53.7,231.4 42.4,226.5" fill="#fafbfb"/><polygon points="59.3,222 59.3,241.2 53.7,231.4" fill="#d6d9dc"/><polygon points="53.7,231.4 59.3,241.2 51.4,243.6 44.7,236.3" fill="#e4e7ea"/><polygon points="59.3,241.2 59.3,252.6 43.5,252.6 51.4,243.6" fill="#ced1d4"/><polygon points="17.1,252.6 43.5,252.6 51.4,243.6 34,246.9" fill="#dee2e5"/><polygon points="3,237.1 3,252.6 17.1,252.6 9.8,243.6" fill="#e1e4e7"/><polygon points="3,237.1 8.6,233 19.9,242 9.8,243.6" fill="#e6e9eb"/><polygon points="9.8,243.6 19.9,242 34,246.9 17.1,252.6" fill="#eaedef"/><text x="31.1" y="218.4" font-size="2.7" fill="#222" font-weight="bold" text-anchor="middle">校园经历</text><path d="M9 223.8q3 7 5 7t-1 5" fill="none" stroke="#c2c8ce" stroke-width="0.7"/><ellipse cx="13.5" cy="228.8" rx="3.4" ry="2.2" fill="#fff" stroke="#d0d5da" stroke-width="0.3"/><path d="M11.5 228.8h2.8" stroke="#1a72d2" stroke-width="0.9" fill="none"/><path d="M11 239.8h3.5" stroke="#1a72d2" stroke-width="1" fill="none"/><path d="M9 242.3h9M9 243.8h6.3" stroke="#858b91" stroke-width="0.6" fill="none"/><path d="M21.2 223.8q3 7 5 7t-1 5" fill="none" stroke="#c2c8ce" stroke-width="0.7"/><ellipse cx="25.7" cy="228.8" rx="3.4" ry="2.2" fill="#fff" stroke="#d0d5da" stroke-width="0.3"/><path d="M23.7 228.8h2.8" stroke="#1a72d2" stroke-width="0.9" fill="none"/><path d="M23.2 239.8h3.5" stroke="#1a72d2" stroke-width="1" fill="none"/><path d="M21.2 242.3h9M21.2 243.8h6.3" stroke="#858b91" stroke-width="0.6" fill="none"/><path d="M33.4 223.8q3 7 5 7t-1 5" fill="none" stroke="#c2c8ce" stroke-width="0.7"/><ellipse cx="37.9" cy="228.8" rx="3.4" ry="2.2" fill="#fff" stroke="#d0d5da" stroke-width="0.3"/><path d="M35.9 228.8h2.8" stroke="#1a72d2" stroke-width="0.9" fill="none"/><path d="M35.4 239.8h3.5" stroke="#1a72d2" stroke-width="1" fill="none"/><path d="M33.4 242.3h9M33.4 243.8h6.3" stroke="#858b91" stroke-width="0.6" fill="none"/><path d="M45.6 223.8q3 7 5 7t-1 5" fill="none" stroke="#c2c8ce" stroke-width="0.7"/><ellipse cx="50.1" cy="228.8" rx="3.4" ry="2.2" fill="#fff" stroke="#d0d5da" stroke-width="0.3"/><path d="M48.1 228.8h2.8" stroke="#1a72d2" stroke-width="0.9" fill="none"/><path d="M47.6 239.8h3.5" stroke="#1a72d2" stroke-width="1" fill="none"/><path d="M45.6 242.3h9M45.6 243.8h6.3" stroke="#858b91" stroke-width="0.6" fill="none"/></g>
<g><rect x="60.6" y="211.8" width="56.3" height="40.8" fill="#f6f7f8"/><polygon points="60.6,211.8 78.1,211.8 68.5,220.8" fill="#c9cbcd"/><polygon points="60.6,211.8 68.5,220.8 60.6,224" fill="#bcbec0"/><polygon points="78.1,211.8 95.5,211.8 79.2,218.7 68.5,220.8" fill="#dde1e4"/><polygon points="60.6,224 68.5,220.8 66.2,233 60.6,237.1" fill="#e2e5e8"/><polygon points="68.5,220.8 79.2,218.7 77.5,228.1 66.2,233" fill="#eceef0"/><polygon points="95.5,211.8 116.9,211.8 116.9,222 97.8,216.7" fill="#f3f4f6"/><polygon points="97.8,216.7 116.9,222 111.3,231.4 100,226.5" fill="#fafbfb"/><polygon points="116.9,222 116.9,241.2 111.3,231.4" fill="#d6d9dc"/><polygon points="111.3,231.4 116.9,241.2 109,243.6 102.3,236.3" fill="#e4e7ea"/><polygon points="116.9,241.2 116.9,252.6 101.1,252.6 109,243.6" fill="#ced1d4"/><polygon points="74.7,252.6 101.1,252.6 109,243.6 91.6,246.9" fill="#dee2e5"/><polygon points="60.6,237.1 60.6,252.6 74.7,252.6 67.4,243.6" fill="#e1e4e7"/><polygon points="60.6,237.1 66.2,233 77.5,242 67.4,243.6" fill="#e6e9eb"/><polygon points="67.4,243.6 77.5,242 91.6,246.9 74.7,252.6" fill="#eaedef"/><text x="88.8" y="218.4" font-size="2.7" fill="#222" font-weight="bold" text-anchor="middle">能力分析</text><path d="M80.9 221.1l4.5 0 3.5 6.5 3.5-6.5 4.5 0-5.5 10.5-5 0z" fill="#1a72d2"/><path d="M80.9 247.3l4.5 0 3.5-6.5 3.5 6.5 4.5 0-5.5-10.5-5 0z" fill="#1a72d2"/><text x="88.9" y="235.2" font-size="2.4" fill="#1a72d2" font-weight="bold" text-anchor="middle">能力分析</text><ellipse cx="67.6" cy="226.8" rx="3.3" ry="4.2" fill="#fff" stroke="#d5d9dd" stroke-width="0.4"/><ellipse cx="67.6" cy="226.8" rx="1" ry="1.4" fill="#1a72d2"/><ellipse cx="110.6" cy="226.8" rx="3.3" ry="4.2" fill="#fff" stroke="#d5d9dd" stroke-width="0.4"/><ellipse cx="110.6" cy="226.8" rx="1" ry="1.4" fill="#1a72d2"/><ellipse cx="67.6" cy="241.8" rx="3.3" ry="4.2" fill="#fff" stroke="#d5d9dd" stroke-width="0.4"/><ellipse cx="67.6" cy="241.8" rx="1" ry="1.4" fill="#1a72d2"/><ellipse cx="110.6" cy="241.8" rx="3.3" ry="4.2" fill="#fff" stroke="#d5d9dd" stroke-width="0.4"/><ellipse cx="110.6" cy="241.8" rx="1" ry="1.4" fill="#1a72d2"/><path d="M72.6 225.8h4.2" stroke="#222" stroke-width="1" fill="none"/><path d="M97.6 225.8h4.2" stroke="#222" stroke-width="1" fill="none"/><path d="M72.6 240.8h4.2" stroke="#222" stroke-width="1" fill="none"/><path d="M97.6 240.8h4.2" stroke="#222" stroke-width="1" fill="none"/></g>
<g><rect x="118.6" y="211.8" width="56.3" height="40.8" fill="#f6f7f8"/><polygon points="118.6,211.8 136.1,211.8 126.5,220.8" fill="#c9cbcd"/><polygon points="118.6,211.8 126.5,220.8 118.6,224" fill="#bcbec0"/><polygon points="136.1,211.8 153.5,211.8 137.2,218.7 126.5,220.8" fill="#dde1e4"/><polygon points="118.6,224 126.5,220.8 124.2,233 118.6,237.1" fill="#e2e5e8"/><polygon points="126.5,220.8 137.2,218.7 135.5,228.1 124.2,233" fill="#eceef0"/><polygon points="153.5,211.8 174.9,211.8 174.9,222 155.8,216.7" fill="#f3f4f6"/><polygon points="155.8,216.7 174.9,222 169.3,231.4 158,226.5" fill="#fafbfb"/><polygon points="174.9,222 174.9,241.2 169.3,231.4" fill="#d6d9dc"/><polygon points="169.3,231.4 174.9,241.2 167,243.6 160.3,236.3" fill="#e4e7ea"/><polygon points="174.9,241.2 174.9,252.6 159.1,252.6 167,243.6" fill="#ced1d4"/><polygon points="132.7,252.6 159.1,252.6 167,243.6 149.6,246.9" fill="#dee2e5"/><polygon points="118.6,237.1 118.6,252.6 132.7,252.6 125.4,243.6" fill="#e1e4e7"/><polygon points="118.6,237.1 124.2,233 135.5,242 125.4,243.6" fill="#e6e9eb"/><polygon points="125.4,243.6 135.5,242 149.6,246.9 132.7,252.6" fill="#eaedef"/><text x="146.8" y="218.4" font-size="2.7" fill="#222" font-weight="bold" text-anchor="middle">能力优势</text><ellipse cx="126.6" cy="228.8" rx="3" ry="3.9" fill="#fff" stroke="#1a72d2" stroke-width="0.7"/><ellipse cx="126.6" cy="228.8" rx="1" ry="1.3" fill="#1a72d2"/><ellipse cx="164.1" cy="226.8" rx="3" ry="3.9" fill="#fff" stroke="#1a72d2" stroke-width="0.7"/><ellipse cx="164.1" cy="226.8" rx="1" ry="1.3" fill="#1a72d2"/><ellipse cx="126.6" cy="239.8" rx="3" ry="3.9" fill="#fff" stroke="#1a72d2" stroke-width="0.7"/><ellipse cx="126.6" cy="239.8" rx="1" ry="1.3" fill="#1a72d2"/><ellipse cx="164.1" cy="239.8" rx="3" ry="3.9" fill="#fff" stroke="#1a72d2" stroke-width="0.7"/><ellipse cx="164.1" cy="239.8" rx="1" ry="1.3" fill="#1a72d2"/><text x="146.6" y="235.3" font-size="2.6" fill="#1a72d2" font-weight="bold" text-anchor="middle">能力优势</text><path d="M131.6 223.8h12M131.6 225.4h8.4" stroke="#858b91" stroke-width="0.6" fill="none"/><path d="M149.6 223.8h12M149.6 225.4h8.4" stroke="#858b91" stroke-width="0.6" fill="none"/><path d="M131.6 242.8h12M131.6 244.4h8.4" stroke="#858b91" stroke-width="0.6" fill="none"/><path d="M149.6 242.8h12M149.6 244.4h8.4" stroke="#858b91" stroke-width="0.6" fill="none"/></g>
<g><rect x="3" y="254.1" width="56.3" height="40.8" fill="#f6f7f8"/><polygon points="3,254.1 20.5,254.1 10.9,263.1" fill="#c9cbcd"/><polygon points="3,254.1 10.9,263.1 3,266.3" fill="#bcbec0"/><polygon points="20.5,254.1 37.9,254.1 21.6,261 10.9,263.1" fill="#dde1e4"/><polygon points="3,266.3 10.9,263.1 8.6,275.3 3,279.4" fill="#e2e5e8"/><polygon points="10.9,263.1 21.6,261 19.9,270.4 8.6,275.3" fill="#eceef0"/><polygon points="37.9,254.1 59.3,254.1 59.3,264.3 40.2,259" fill="#f3f4f6"/><polygon points="40.2,259 59.3,264.3 53.7,273.7 42.4,268.8" fill="#fafbfb"/><polygon points="59.3,264.3 59.3,283.5 53.7,273.7" fill="#d6d9dc"/><polygon points="53.7,273.7 59.3,283.5 51.4,285.9 44.7,278.6" fill="#e4e7ea"/><polygon points="59.3,283.5 59.3,294.9 43.5,294.9 51.4,285.9" fill="#ced1d4"/><polygon points="17.1,294.9 43.5,294.9 51.4,285.9 34,289.2" fill="#dee2e5"/><polygon points="3,279.4 3,294.9 17.1,294.9 9.8,285.9" fill="#e1e4e7"/><polygon points="3,279.4 8.6,275.3 19.9,284.3 9.8,285.9" fill="#e6e9eb"/><polygon points="9.8,285.9 19.9,284.3 34,289.2 17.1,294.9" fill="#eaedef"/><path d="M8 269.8h50" stroke="#1a72d2" stroke-width="0.5" stroke-dasharray="2 1"/><path d="M7.5 269.8a5.5 7 0 0 0 11 0z" fill="#fff" stroke="#b8bec4" stroke-width="0.5"/><ellipse cx="11.5" cy="264.1" rx="1.9" ry="2.4" fill="#1a72d2"/><path d="M9 281.1h8M9 282.7h5.6" stroke="#858b91" stroke-width="0.6" fill="none"/><path d="M19.7 269.8a5.5 7 0 0 0 11 0z" fill="#fff" stroke="#b8bec4" stroke-width="0.5"/><ellipse cx="23.7" cy="264.1" rx="1.9" ry="2.4" fill="#1a72d2"/><path d="M21.2 281.1h8M21.2 282.7h5.6" stroke="#858b91" stroke-width="0.6" fill="none"/><path d="M31.9 269.8a5.5 7 0 0 0 11 0z" fill="#fff" stroke="#b8bec4" stroke-width="0.5"/><ellipse cx="35.9" cy="264.1" rx="1.9" ry="2.4" fill="#1a72d2"/><path d="M33.4 281.1h8M33.4 282.7h5.6" stroke="#858b91" stroke-width="0.6" fill="none"/><path d="M44.1 269.8a5.5 7 0 0 0 11 0z" fill="#fff" stroke="#b8bec4" stroke-width="0.5"/><ellipse cx="48.1" cy="264.1" rx="1.9" ry="2.4" fill="#1a72d2"/><path d="M45.6 281.1h8M45.6 282.7h5.6" stroke="#858b91" stroke-width="0.6" fill="none"/></g>
<g><rect x="60.6" y="254.1" width="56.3" height="40.8" fill="#f6f7f8"/><polygon points="60.6,254.1 78.1,254.1 68.5,263.1" fill="#c9cbcd"/><polygon points="60.6,254.1 68.5,263.1 60.6,266.3" fill="#bcbec0"/><polygon points="78.1,254.1 95.5,254.1 79.2,261 68.5,263.1" fill="#dde1e4"/><polygon points="60.6,266.3 68.5,263.1 66.2,275.3 60.6,279.4" fill="#e2e5e8"/><polygon points="68.5,263.1 79.2,261 77.5,270.4 66.2,275.3" fill="#eceef0"/><polygon points="95.5,254.1 116.9,254.1 116.9,264.3 97.8,259" fill="#f3f4f6"/><polygon points="97.8,259 116.9,264.3 111.3,273.7 100,268.8" fill="#fafbfb"/><polygon points="116.9,264.3 116.9,283.5 111.3,273.7" fill="#d6d9dc"/><polygon points="111.3,273.7 116.9,283.5 109,285.9 102.3,278.6" fill="#e4e7ea"/><polygon points="116.9,283.5 116.9,294.9 101.1,294.9 109,285.9" fill="#ced1d4"/><polygon points="74.7,294.9 101.1,294.9 109,285.9 91.6,289.2" fill="#dee2e5"/><polygon points="60.6,279.4 60.6,294.9 74.7,294.9 67.4,285.9" fill="#e1e4e7"/><polygon points="60.6,279.4 66.2,275.3 77.5,284.3 67.4,285.9" fill="#e6e9eb"/><polygon points="67.4,285.9 77.5,284.3 91.6,289.2 74.7,294.9" fill="#eaedef"/><text x="88.8" y="260.7" font-size="2.7" fill="#222" font-weight="bold" text-anchor="middle">行动计划</text><ellipse cx="72.1" cy="275.1" rx="3.8" ry="4.9" fill="#1a72d2"/><ellipse cx="72.1" cy="275.1" rx="4.6" ry="5.8" fill="none" stroke="#fff" stroke-width="0.6"/><path d="M84.6 274.1q-4-6 0-9q4 3 0 9z" fill="#fff" stroke="#c5cbd1" stroke-width="0.4"/><ellipse cx="84.6" cy="276.1" rx="1.1" ry="1.4" fill="#1a72d2"/><path d="M81.6 280.1h4.2" stroke="#222" stroke-width="1" fill="none"/><path d="M81.6 282.6h6M81.6 284.1h6M81.6 285.6h4.2" stroke="#858b91" stroke-width="0.6" fill="none"/><path d="M93.2 274.1q-4-6 0-9q4 3 0 9z" fill="#fff" stroke="#c5cbd1" stroke-width="0.4"/><ellipse cx="93.2" cy="276.1" rx="1.1" ry="1.4" fill="#1a72d2"/><path d="M90.2 280.1h4.2" stroke="#222" stroke-width="1" fill="none"/><path d="M90.2 282.6h6M90.2 284.1h6M90.2 285.6h4.2" stroke="#858b91" stroke-width="0.6" fill="none"/><path d="M101.8 274.1q-4-6 0-9q4 3 0 9z" fill="#fff" stroke="#c5cbd1" stroke-width="0.4"/><ellipse cx="101.8" cy="276.1" rx="1.1" ry="1.4" fill="#1a72d2"/><path d="M98.8 280.1h4.2" stroke="#222" stroke-width="1" fill="none"/><path d="M98.8 282.6h6M98.8 284.1h6M98.8 285.6h4.2" stroke="#858b91" stroke-width="0.6" fill="none"/><path d="M110.4 274.1q-4-6 0-9q4 3 0 9z" fill="#fff" stroke="#c5cbd1" stroke-width="0.4"/><ellipse cx="110.4" cy="276.1" rx="1.1" ry="1.4" fill="#1a72d2"/><path d="M107.4 280.1h4.2" stroke="#222" stroke-width="1" fill="none"/><path d="M107.4 282.6h6M107.4 284.1h6M107.4 285.6h4.2" stroke="#858b91" stroke-width="0.6" fill="none"/><path d="M78.6 276.1h34" stroke="#1a72d2" stroke-width="0.3"/></g>
<g><rect x="118.6" y="254.1" width="56.3" height="40.8" fill="#f6f7f8"/><polygon points="118.6,254.1 136.1,254.1 126.5,263.1" fill="#c9cbcd"/><polygon points="118.6,254.1 126.5,263.1 118.6,266.3" fill="#bcbec0"/><polygon points="136.1,254.1 153.5,254.1 137.2,261 126.5,263.1" fill="#dde1e4"/><polygon points="118.6,266.3 126.5,263.1 124.2,275.3 118.6,279.4" fill="#e2e5e8"/><polygon points="126.5,263.1 137.2,261 135.5,270.4 124.2,275.3" fill="#eceef0"/><polygon points="153.5,254.1 174.9,254.1 174.9,264.3 155.8,259" fill="#f3f4f6"/><polygon points="155.8,259 174.9,264.3 169.3,273.7 158,268.8" fill="#fafbfb"/><polygon points="174.9,264.3 174.9,283.5 169.3,273.7" fill="#d6d9dc"/><polygon points="169.3,273.7 174.9,283.5 167,285.9 160.3,278.6" fill="#e4e7ea"/><polygon points="174.9,283.5 174.9,294.9 159.1,294.9 167,285.9" fill="#ced1d4"/><polygon points="132.7,294.9 159.1,294.9 167,285.9 149.6,289.2" fill="#dee2e5"/><polygon points="118.6,279.4 118.6,294.9 132.7,294.9 125.4,285.9" fill="#e1e4e7"/><polygon points="118.6,279.4 124.2,275.3 135.5,284.3 125.4,285.9" fill="#e6e9eb"/><polygon points="125.4,285.9 135.5,284.3 149.6,289.2 132.7,294.9" fill="#eaedef"/><text x="146.8" y="260.7" font-size="2.7" fill="#222" font-weight="bold" text-anchor="middle">职业生涯规划</text><ellipse cx="130.6" cy="275.6" rx="4" ry="5.2" fill="#fff" stroke="#d5d9dd" stroke-width="0.4"/><ellipse cx="130.6" cy="275.6" rx="2.5" ry="3.2" fill="#1a72d2"/><ellipse cx="141.2" cy="275.6" rx="4" ry="5.2" fill="#fff" stroke="#d5d9dd" stroke-width="0.4"/><ellipse cx="141.2" cy="275.6" rx="2.5" ry="3.2" fill="#1a72d2"/><ellipse cx="151.8" cy="275.6" rx="4" ry="5.2" fill="#fff" stroke="#d5d9dd" stroke-width="0.4"/><ellipse cx="151.8" cy="275.6" rx="2.5" ry="3.2" fill="#1a72d2"/><ellipse cx="162.4" cy="275.6" rx="4" ry="5.2" fill="#fff" stroke="#d5d9dd" stroke-width="0.4"/><ellipse cx="162.4" cy="275.6" rx="2.5" ry="3.2" fill="#1a72d2"/><path d="M126.6 266.1h8M126.6 267.6h5.6" stroke="#858b91" stroke-width="0.6" fill="none"/><path d="M148.6 266.1h8M148.6 267.6h5.6" stroke="#858b91" stroke-width="0.6" fill="none"/><path d="M137.6 285.1h8M137.6 286.6h5.6" stroke="#858b91" stroke-width="0.6" fill="none"/><path d="M159.6 285.1h8M159.6 286.6h5.6" stroke="#858b91" stroke-width="0.6" fill="none"/></g>
<g><rect x="3" y="296.4" width="56.3" height="40.8" fill="#f6f7f8"/><polygon points="3,296.4 20.5,296.4 10.9,305.4" fill="#c9cbcd"/><polygon points="3,296.4 10.9,305.4 3,308.6" fill="#bcbec0"/><polygon points="20.5,296.4 37.9,296.4 21.6,303.3 10.9,305.4" fill="#dde1e4"/><polygon points="3,308.6 10.9,305.4 8.6,317.6 3,321.7" fill="#e2e5e8"/><polygon points="10.9,305.4 21.6,303.3 19.9,312.7 8.6,317.6" fill="#eceef0"/><polygon points="37.9,296.4 59.3,296.4 59.3,306.6 40.2,301.3" fill="#f3f4f6"/><polygon points="40.2,301.3 59.3,306.6 53.7,316 42.4,311.1" fill="#fafbfb"/><polygon points="59.3,306.6 59.3,325.8 53.7,316" fill="#d6d9dc"/><polygon points="53.7,316 59.3,325.8 51.4,328.2 44.7,320.9" fill="#e4e7ea"/><polygon points="59.3,325.8 59.3,337.2 43.5,337.2 51.4,328.2" fill="#ced1d4"/><polygon points="17.1,337.2 43.5,337.2 51.4,328.2 34,331.5" fill="#dee2e5"/><polygon points="3,321.7 3,337.2 17.1,337.2 9.8,328.2" fill="#e1e4e7"/><polygon points="3,321.7 8.6,317.6 19.9,326.6 9.8,328.2" fill="#e6e9eb"/><polygon points="9.8,328.2 19.9,326.6 34,331.5 17.1,337.2" fill="#eaedef"/><text x="31.1" y="303" font-size="2.7" fill="#222" font-weight="bold" text-anchor="middle">职位胜任能力</text><rect x="10.9" y="307.4" width="9.2" height="25" fill="#fbfbfc" rx="3" stroke="#d3d8dc" stroke-width="0.4"/><ellipse cx="15.5" cy="311.9" rx="3.3" ry="4.2" fill="#fff" stroke="#1a72d2" stroke-width="0.7"/><path d="M14 318.9h2.1" stroke="#1a72d2" stroke-width="0.9" fill="none"/><path d="M12.5 322.4h6M12.5 324.1h6M12.5 325.8h6M12.5 327.5h4.2" stroke="#858b91" stroke-width="0.6" fill="none"/><rect x="21.4" y="307.4" width="9.2" height="25" fill="#fbfbfc" rx="3" stroke="#d3d8dc" stroke-width="0.4"/><ellipse cx="26" cy="311.9" rx="3.3" ry="4.2" fill="#fff" stroke="#1a72d2" stroke-width="0.7"/><path d="M24.5 318.9h2.1" stroke="#1a72d2" stroke-width="0.9" fill="none"/><path d="M23 322.4h6M23 324.1h6M23 325.8h6M23 327.5h4.2" stroke="#858b91" stroke-width="0.6" fill="none"/><rect x="31.9" y="307.4" width="9.2" height="25" fill="#fbfbfc" rx="3" stroke="#d3d8dc" stroke-width="0.4"/><ellipse cx="36.5" cy="311.9" rx="3.3" ry="4.2" fill="#fff" stroke="#1a72d2" stroke-width="0.7"/><path d="M35 318.9h2.1" stroke="#1a72d2" stroke-width="0.9" fill="none"/><path d="M33.5 322.4h6M33.5 324.1h6M33.5 325.8h6M33.5 327.5h4.2" stroke="#858b91" stroke-width="0.6" fill="none"/><rect x="42.4" y="307.4" width="9.2" height="25" fill="#fbfbfc" rx="3" stroke="#d3d8dc" stroke-width="0.4"/><ellipse cx="47" cy="311.9" rx="3.3" ry="4.2" fill="#fff" stroke="#1a72d2" stroke-width="0.7"/><path d="M45.5 318.9h2.1" stroke="#1a72d2" stroke-width="0.9" fill="none"/><path d="M44 322.4h6M44 324.1h6M44 325.8h6M44 327.5h4.2" stroke="#858b91" stroke-width="0.6" fill="none"/></g>
<g><rect x="60.6" y="296.4" width="56.3" height="40.8" fill="#f6f7f8"/><polygon points="60.6,296.4 78.1,296.4 68.5,305.4" fill="#c9cbcd"/><polygon points="60.6,296.4 68.5,305.4 60.6,308.6" fill="#bcbec0"/><polygon points="78.1,296.4 95.5,296.4 79.2,303.3 68.5,305.4" fill="#dde1e4"/><polygon points="60.6,308.6 68.5,305.4 66.2,317.6 60.6,321.7" fill="#e2e5e8"/><polygon points="68.5,305.4 79.2,303.3 77.5,312.7 66.2,317.6" fill="#eceef0"/><polygon points="95.5,296.4 116.9,296.4 116.9,306.6 97.8,301.3" fill="#f3f4f6"/><polygon points="97.8,301.3 116.9,306.6 111.3,316 100,311.1" fill="#fafbfb"/><polygon points="116.9,306.6 116.9,325.8 111.3,316" fill="#d6d9dc"/><polygon points="111.3,316 116.9,325.8 109,328.2 102.3,320.9" fill="#e4e7ea"/><polygon points="116.9,325.8 116.9,337.2 101.1,337.2 109,328.2" fill="#ced1d4"/><polygon points="74.7,337.2 101.1,337.2 109,328.2 91.6,331.5" fill="#dee2e5"/><polygon points="60.6,321.7 60.6,337.2 74.7,337.2 67.4,328.2" fill="#e1e4e7"/><polygon points="60.6,321.7 66.2,317.6 77.5,326.6 67.4,328.2" fill="#e6e9eb"/><polygon points="67.4,328.2 77.5,326.6 91.6,331.5 74.7,337.2" fill="#eaedef"/><text x="88.8" y="303" font-size="2.7" fill="#222" font-weight="bold" text-anchor="middle">行业前景分析</text><ellipse cx="74.6" cy="319.9" rx="7" ry="8.5" fill="#e8ebee" stroke="#8d949b" stroke-width="0.6"/><ellipse cx="74.6" cy="319.9" rx="5.2" ry="6.5" fill="#8fb3d9"/><path d="M72.1 324.4l2.5-9 2.5 9z" fill="#e8f0f8"/><ellipse cx="83.1" cy="309.9" rx="2.3" ry="2.9" fill="#1a72d2"/><path d="M87.6 307.9h4.9" stroke="#1a72d2" stroke-width="0.9" fill="none"/><path d="M87.6 309.9h18M87.6 311.5h12.6" stroke="#858b91" stroke-width="0.6" fill="none"/><ellipse cx="86.6" cy="319.9" rx="2.3" ry="2.9" fill="#1a72d2"/><path d="M91.1 317.9h4.9" stroke="#1a72d2" stroke-width="0.9" fill="none"/><path d="M91.1 319.9h18M91.1 321.5h12.6" stroke="#858b91" stroke-width="0.6" fill="none"/><ellipse cx="83.1" cy="329.4" rx="2.3" ry="2.9" fill="#1a72d2"/><path d="M87.6 327.4h4.9" stroke="#1a72d2" stroke-width="0.9" fill="none"/><path d="M87.6 329.4h18M87.6 331h12.6" stroke="#858b91" stroke-width="0.6" fill="none"/></g>
<g><rect x="118.6" y="296.4" width="56.3" height="40.8" fill="#f6f7f8"/><polygon points="118.6,296.4 136.1,296.4 126.5,305.4" fill="#c9cbcd"/><polygon points="118.6,296.4 126.5,305.4 118.6,308.6" fill="#bcbec0"/><polygon points="136.1,296.4 153.5,296.4 137.2,303.3 126.5,305.4" fill="#dde1e4"/><polygon points="118.6,308.6 126.5,305.4 124.2,317.6 118.6,321.7" fill="#e2e5e8"/><polygon points="126.5,305.4 137.2,303.3 135.5,312.7 124.2,317.6" fill="#eceef0"/><polygon points="153.5,296.4 174.9,296.4 174.9,306.6 155.8,301.3" fill="#f3f4f6"/><polygon points="155.8,301.3 174.9,306.6 169.3,316 158,311.1" fill="#fafbfb"/><polygon points="174.9,306.6 174.9,325.8 169.3,316" fill="#d6d9dc"/><polygon points="169.3,316 174.9,325.8 167,328.2 160.3,320.9" fill="#e4e7ea"/><polygon points="174.9,325.8 174.9,337.2 159.1,337.2 167,328.2" fill="#ced1d4"/><polygon points="132.7,337.2 159.1,337.2 167,328.2 149.6,331.5" fill="#dee2e5"/><polygon points="118.6,321.7 118.6,337.2 132.7,337.2 125.4,328.2" fill="#e1e4e7"/><polygon points="118.6,321.7 124.2,317.6 135.5,326.6 125.4,328.2" fill="#e6e9eb"/><polygon points="125.4,328.2 135.5,326.6 149.6,331.5 132.7,337.2" fill="#eaedef"/><text x="146.8" y="303" font-size="2.7" fill="#222" font-weight="bold" text-anchor="middle">就业方向</text><rect x="124.1" y="309.9" width="17.5" height="7.5" fill="#f9fafb" stroke="#1a72d2" stroke-width="0.8"/><rect x="124.1" y="308.9" width="12.5" height="9.5" fill="#f6f7f8"/><path d="M126.1 311.9h13M126.1 313.7h13M126.1 315.5h9.1" stroke="#858b91" stroke-width="0.6" fill="none"/><rect x="150.1" y="309.9" width="17.5" height="7.5" fill="#f9fafb" stroke="#1a72d2" stroke-width="0.8"/><rect x="155.1" y="308.9" width="12.5" height="9.5" fill="#f6f7f8"/><path d="M152.1 311.9h13M152.1 313.7h13M152.1 315.5h9.1" stroke="#858b91" stroke-width="0.6" fill="none"/><rect x="124.1" y="321.4" width="17.5" height="7.5" fill="#f9fafb" stroke="#1a72d2" stroke-width="0.8"/><rect x="124.1" y="320.4" width="12.5" height="9.5" fill="#f6f7f8"/><path d="M126.1 323.4h13M126.1 325.2h13M126.1 327h9.1" stroke="#858b91" stroke-width="0.6" fill="none"/><rect x="150.1" y="321.4" width="17.5" height="7.5" fill="#f9fafb" stroke="#1a72d2" stroke-width="0.8"/><rect x="155.1" y="320.4" width="12.5" height="9.5" fill="#f6f7f8"/><path d="M152.1 323.4h13M152.1 325.2h13M152.1 327h9.1" stroke="#858b91" stroke-width="0.6" fill="none"/><path d="M144.1 311.4h3.5M144.1 313.2h3.5M144.1 315h2.4" stroke="#444" stroke-width="0.9" fill="none"/><path d="M144.1 322.9h3.5M144.1 324.7h3.5M144.1 326.5h2.4" stroke="#444" stroke-width="0.9" fill="none"/></g>
<g><rect x="3" y="338.7" width="56.3" height="40.8" fill="#f6f7f8"/><polygon points="3,338.7 20.5,338.7 10.9,347.7" fill="#c9cbcd"/><polygon points="3,338.7 10.9,347.7 3,350.9" fill="#bcbec0"/><polygon points="20.5,338.7 37.9,338.7 21.6,345.6 10.9,347.7" fill="#dde1e4"/><polygon points="3,350.9 10.9,347.7 8.6,359.9 3,364" fill="#e2e5e8"/><polygon points="10.9,347.7 21.6,345.6 19.9,355 8.6,359.9" fill="#eceef0"/><polygon points="37.9,338.7 59.3,338.7 59.3,348.9 40.2,343.6" fill="#f3f4f6"/><polygon points="40.2,343.6 59.3,348.9 53.7,358.3 42.4,353.4" fill="#fafbfb"/><polygon points="59.3,348.9 59.3,368.1 53.7,358.3" fill="#d6d9dc"/><polygon points="53.7,358.3 59.3,368.1 51.4,370.5 44.7,363.2" fill="#e4e7ea"/><polygon points="59.3,368.1 59.3,379.5 43.5,379.5 51.4,370.5" fill="#ced1d4"/><polygon points="17.1,379.5 43.5,379.5 51.4,370.5 34,373.8" fill="#dee2e5"/><polygon points="3,364 3,379.5 17.1,379.5 9.8,370.5" fill="#e1e4e7"/><polygon points="3,364 8.6,359.9 19.9,368.9 9.8,370.5" fill="#e6e9eb"/><polygon points="9.8,370.5 19.9,368.9 34,373.8 17.1,379.5" fill="#eaedef"/><text x="31.1" y="345.3" font-size="2.7" fill="#222" font-weight="bold" text-anchor="middle">工作经历</text><path d="M30 349.2l-10 19M39 356.7l-11 20" stroke="#fff" stroke-width="3.2" stroke-linecap="round"/><path d="M31.8 349.7l-10 19M40.8 357.2l-11 20" stroke="#d5dade" stroke-width="0.4" stroke-linecap="round" fill="none"/><ellipse cx="25" cy="355.2" rx="1.4" ry="1.8" fill="#1a72d2"/><ellipse cx="28.5" cy="359.7" rx="1.4" ry="1.8" fill="#1a72d2"/><ellipse cx="32" cy="364.2" rx="1.4" ry="1.8" fill="#1a72d2"/><ellipse cx="35.5" cy="368.7" rx="1.4" ry="1.8" fill="#1a72d2"/><rect x="34" y="348.2" width="13" height="2.5" fill="#e1e5e8"/><path d="M42 358.2h9.1" stroke="#858b91" stroke-width="0.6" fill="none"/><path d="M16 371.7h13M16 373.3h9.1" stroke="#858b91" stroke-width="0.6" fill="none"/></g>
<g><rect x="60.6" y="338.7" width="56.3" height="40.8" fill="#f6f7f8"/><polygon points="60.6,338.7 78.1,338.7 68.5,347.7" fill="#c9cbcd"/><polygon points="60.6,338.7 68.5,347.7 60.6,350.9" fill="#bcbec0"/><polygon points="78.1,338.7 95.5,338.7 79.2,345.6 68.5,347.7" fill="#dde1e4"/><polygon points="60.6,350.9 68.5,347.7 66.2,359.9 60.6,364" fill="#e2e5e8"/><polygon points="68.5,347.7 79.2,345.6 77.5,355 66.2,359.9" fill="#eceef0"/><polygon points="95.5,338.7 116.9,338.7 116.9,348.9 97.8,343.6" fill="#f3f4f6"/><polygon points="97.8,343.6 116.9,348.9 111.3,358.3 100,353.4" fill="#fafbfb"/><polygon points="116.9,348.9 116.9,368.1 111.3,358.3" fill="#d6d9dc"/><polygon points="111.3,358.3 116.9,368.1 109,370.5 102.3,363.2" fill="#e4e7ea"/><polygon points="116.9,368.1 116.9,379.5 101.1,379.5 109,370.5" fill="#ced1d4"/><polygon points="74.7,379.5 101.1,379.5 109,370.5 91.6,373.8" fill="#dee2e5"/><polygon points="60.6,364 60.6,379.5 74.7,379.5 67.4,370.5" fill="#e1e4e7"/><polygon points="60.6,364 66.2,359.9 77.5,368.9 67.4,370.5" fill="#e6e9eb"/><polygon points="67.4,370.5 77.5,368.9 91.6,373.8 74.7,379.5" fill="#eaedef"/><text x="88.8" y="345.3" font-size="2.7" fill="#222" font-weight="bold" text-anchor="middle">工作能力展示</text><path d="M77.1 351.7l7.5 9.5-7.5 9.5-7.5-9.5z" fill="none" stroke="#c2c8ce" stroke-width="0.4" stroke-dasharray="1 0.7"/><rect x="75.4" y="358.7" width="3.4" height="5" fill="#4a4e53"/><ellipse cx="77.1" cy="350.2" rx="2" ry="2.6" fill="#1a72d2"/><ellipse cx="67.1" cy="361.2" rx="2" ry="2.6" fill="#1a72d2"/><ellipse cx="87.1" cy="361.2" rx="2" ry="2.6" fill="#1a72d2"/><ellipse cx="77.1" cy="372.7" rx="2" ry="2.6" fill="#1a72d2"/><path d="M90.6 348.2h5.6" stroke="#333" stroke-width="0.8" fill="none"/><rect x="90.6" y="350.7" width="20" height="4.5" fill="#dcdfe2"/><path d="M90.6 359.2h20M90.6 360.9h20M90.6 362.6h14" stroke="#555" stroke-width="0.6" fill="none"/><rect x="90.6" y="366.7" width="20" height="6" fill="#dfe2e5"/><path d="M63.6 369.2h4.9" stroke="#1a72d2" stroke-width="0.8" fill="none"/><path d="M80.6 373.7h3.5" stroke="#1a72d2" stroke-width="0.8" fill="none"/></g>
<g><rect x="118.6" y="338.7" width="56.3" height="40.8" fill="#f6f7f8"/><polygon points="118.6,338.7 136.1,338.7 126.5,347.7" fill="#c9cbcd"/><polygon points="118.6,338.7 126.5,347.7 118.6,350.9" fill="#bcbec0"/><polygon points="136.1,338.7 153.5,338.7 137.2,345.6 126.5,347.7" fill="#dde1e4"/><polygon points="118.6,350.9 126.5,347.7 124.2,359.9 118.6,364" fill="#e2e5e8"/><polygon points="126.5,347.7 137.2,345.6 135.5,355 124.2,359.9" fill="#eceef0"/><polygon points="153.5,338.7 174.9,338.7 174.9,348.9 155.8,343.6" fill="#f3f4f6"/><polygon points="155.8,343.6 174.9,348.9 169.3,358.3 158,353.4" fill="#fafbfb"/><polygon points="174.9,348.9 174.9,368.1 169.3,358.3" fill="#d6d9dc"/><polygon points="169.3,358.3 174.9,368.1 167,370.5 160.3,363.2" fill="#e4e7ea"/><polygon points="174.9,368.1 174.9,379.5 159.1,379.5 167,370.5" fill="#ced1d4"/><polygon points="132.7,379.5 159.1,379.5 167,370.5 149.6,373.8" fill="#dee2e5"/><polygon points="118.6,364 118.6,379.5 132.7,379.5 125.4,370.5" fill="#e1e4e7"/><polygon points="118.6,364 124.2,359.9 135.5,368.9 125.4,370.5" fill="#e6e9eb"/><polygon points="125.4,370.5 135.5,368.9 149.6,373.8 132.7,379.5" fill="#eaedef"/><text x="146.8" y="345.3" font-size="2.7" fill="#222" font-weight="bold" text-anchor="middle">自我介绍</text><rect x="123.6" y="349.2" width="14.5" height="27" fill="#c9cdd1" rx="2"/><rect x="124.6" y="350.2" width="12.5" height="24" fill="#7ba7d6" rx="1.5"/><path d="M129.6 374.2v-14l2-4 1.5 18zM126.1 374.2v-9h3v9z" fill="#dbe8f4"/><text x="141.1" y="352.7" font-size="2.3" fill="#222" font-weight="bold" text-anchor="start">自我简介</text><path d="M141.1 355.7h11M141.1 357.6h11M141.1 359.5h11M141.1 361.4h11M141.1 363.3h11M141.1 365.2h11M141.1 367.1h11M141.1 369h11M141.1 370.9h7.7" stroke="#858b91" stroke-width="0.6" fill="none"/><ellipse cx="156.1" cy="352.2" rx="2" ry="2.6" fill="#1a72d2"/><path d="M159.6 350.7h9M159.6 352.4h6.3" stroke="#333" stroke-width="0.6" fill="none"/><path d="M154.6 357.7h15M154.6 359.5h15M154.6 361.3h15M154.6 363.1h10.5" stroke="#858b91" stroke-width="0.6" fill="none"/><ellipse cx="156.1" cy="369.7" rx="2" ry="2.6" fill="#1a72d2"/><path d="M159.6 368.7h9M159.6 370.4h6.3" stroke="#333" stroke-width="0.6" fill="none"/></g>
<rect x="3" y="381" width="172" height="122.5" fill="#f4f5f6"/><polygon points="3,381 56.3,381 27.1,407.9" fill="#c9cbcd"/><polygon points="3,381 27.1,407.9 3,417.8" fill="#bcbec0"/><polygon points="56.3,381 109.6,381 59.8,401.8 27.1,407.9" fill="#dde1e4"/><polygon points="3,417.8 27.1,407.9 20.2,444.7 3,456.9" fill="#e2e5e8"/><polygon points="27.1,407.9 59.8,401.8 54.6,430 20.2,444.7" fill="#eceef0"/><polygon points="109.6,381 175,381 175,411.6 116.5,395.7" fill="#f3f4f6"/><polygon points="116.5,395.7 175,411.6 157.8,439.8 123.4,425.1" fill="#fafbfb"/><polygon points="175,411.6 175,469.2 157.8,439.8" fill="#d6d9dc"/><polygon points="157.8,439.8 175,469.2 150.9,476.6 130.3,454.5" fill="#e4e7ea"/><polygon points="175,469.2 175,503.5 126.8,503.5 150.9,476.6" fill="#ced1d4"/><polygon points="46,503.5 126.8,503.5 150.9,476.6 97.6,486.4" fill="#dee2e5"/><polygon points="3,456.9 3,503.5 46,503.5 23.6,476.6" fill="#e1e4e7"/><polygon points="3,456.9 20.2,444.7 54.6,471.6 23.6,476.6" fill="#e6e9eb"/><polygon points="23.6,476.6 54.6,471.6 97.6,486.4 46,503.5" fill="#eaedef"/>
<text transform="translate(88.9,399.8) scale(1,1.1)" font-size="6.3" fill="#111" font-weight="bold" text-anchor="middle">选择原因</text>
<path d="M57 442l11-12.5M57 450h11M57 459l12 10.5" stroke="#3b86d6" stroke-width="0.7" stroke-dasharray="1.2 0.9" fill="none"/>
<polygon points="23.3,452 32,433.5 47,433.5 55.7,452 47,470.5 32,470.5" fill="#a9adb1" opacity="0.6"/>
<polygon points="24.4,450.3 33.1,431.8 47.9,431.8 56.6,450.3 47.9,468.8 33.1,468.8" fill="#f0f2f4"/>
<text transform="translate(41.2,449.2) scale(1,1.1)" font-size="6.2" fill="#0f62b8" font-weight="bold" text-anchor="middle">选择</text>
<text transform="translate(41.2,458.9) scale(1,1.1)" font-size="6.2" fill="#0f62b8" font-weight="bold" text-anchor="middle">原因</text>
<polygon points="66.5,423.3 70.8,414.3 78.2,414.3 82.5,423.3 78.2,432.3 70.8,432.3" fill="#a9adb1" opacity="0.6"/>
<polygon points="67.5,422 71.7,413.1 78.9,413.1 83.1,422 78.9,430.9 71.7,430.9" fill="#f1f3f5"/>
<text transform="translate(77.6,421) scale(1,1.1)" font-size="4.2" fill="#0f62b8" font-weight="bold" text-anchor="middle">专业</text>
<text transform="translate(77.6,427.5) scale(1,1.1)" font-size="4.2" fill="#0f62b8" font-weight="bold" text-anchor="middle">对口</text>
<rect x="89.3" y="414.7" width="61" height="17.6" fill="#8f9397" rx="1.5" opacity="0.7"/>
<rect x="90.3" y="413.2" width="60.5" height="17.3" fill="#e9ecef" rx="1.5"/>
<polygon points="66.5,450.8 70.8,441.8 78.2,441.8 82.5,450.8 78.2,459.8 70.8,459.8" fill="#a9adb1" opacity="0.6"/>
<polygon points="67.5,449.5 71.7,440.6 78.9,440.6 83.1,449.5 78.9,458.4 71.7,458.4" fill="#f1f3f5"/>
<text transform="translate(77.6,448.5) scale(1,1.1)" font-size="4.2" fill="#0f62b8" font-weight="bold" text-anchor="middle">就近</text>
<text transform="translate(77.6,455) scale(1,1.1)" font-size="4.2" fill="#0f62b8" font-weight="bold" text-anchor="middle">家乡</text>
<rect x="89.3" y="442.2" width="61" height="17.6" fill="#8f9397" rx="1.5" opacity="0.7"/>
<rect x="90.3" y="440.7" width="60.5" height="17.3" fill="#e9ecef" rx="1.5"/>
<polygon points="66.5,478.5 70.8,469.5 78.2,469.5 82.5,478.5 78.2,487.5 70.8,487.5" fill="#a9adb1" opacity="0.6"/>
<polygon points="67.5,477.2 71.7,468.3 78.9,468.3 83.1,477.2 78.9,486.1 71.7,486.1" fill="#f1f3f5"/>
<text transform="translate(77.6,476.2) scale(1,1.1)" font-size="4.2" fill="#0f62b8" font-weight="bold" text-anchor="middle">提供</text>
<text transform="translate(77.6,482.7) scale(1,1.1)" font-size="4.2" fill="#0f62b8" font-weight="bold" text-anchor="middle">机遇</text>
<rect x="89.3" y="469.9" width="61" height="17.6" fill="#8f9397" rx="1.5" opacity="0.7"/>
<rect x="90.3" y="468.4" width="60.5" height="17.3" fill="#e9ecef" rx="1.5"/>
<text x="94.8" y="418.7" font-size="2.5" fill="#33373c" font-weight="normal" text-anchor="start">用2-3点简述理由，如就业前景好，就近就业，</text>
<text x="94.8" y="423" font-size="2.5" fill="#33373c" font-weight="normal" text-anchor="start">薪资待遇高，符合个人兴趣爱好等，最多不超</text>
<text x="94.8" y="427.3" font-size="2.5" fill="#33373c" font-weight="normal" text-anchor="start">过三个点，简明扼要。</text>
<text x="94.8" y="446.2" font-size="2.5" fill="#33373c" font-weight="normal" text-anchor="start">用2-3点简述理由，如就业前景好，就近就业，</text>
<text x="94.8" y="450.5" font-size="2.5" fill="#33373c" font-weight="normal" text-anchor="start">薪资待遇高，符合个人兴趣爱好等，最多不超</text>
<text x="94.8" y="454.8" font-size="2.5" fill="#33373c" font-weight="normal" text-anchor="start">过三个点，简明扼要。</text>
<text x="94.8" y="473.9" font-size="2.5" fill="#33373c" font-weight="normal" text-anchor="start">用2-3点简述理由，如就业前景好，就近就业，</text>
<text x="94.8" y="478.2" font-size="2.5" fill="#33373c" font-weight="normal" text-anchor="start">薪资待遇高，符合个人兴趣爱好等，最多不</text>
<text x="94.8" y="482.5" font-size="2.5" fill="#33373c" font-weight="normal" text-anchor="start">超过三个点，简明扼要。</text>
<path d="M1.5 0V506M0 1.5H177" stroke="#c2c2c2" stroke-width="3" fill="none"/><path d="M0 505H177" stroke="#c2c2c2" stroke-width="2" fill="none"/>
<path d="M1.5 0V506" stroke="#fff" stroke-width="3" stroke-dasharray="8 8" fill="none"/>
<path d="M0 1.5H177" stroke="#fff" stroke-width="3" stroke-dasharray="8 8" fill="none"/>
<path d="M176 0V506" stroke="#fff" stroke-width="2" stroke-dasharray="8 8" fill="none"/>
<path d="M0 505H177" stroke="#fff" stroke-width="2" stroke-dasharray="8 8" fill="none"/>
</svg>
</div>
<div id="status"><span>神奇PPT转长图软件 2.0</span></div>
</div>
</body>
</html>
